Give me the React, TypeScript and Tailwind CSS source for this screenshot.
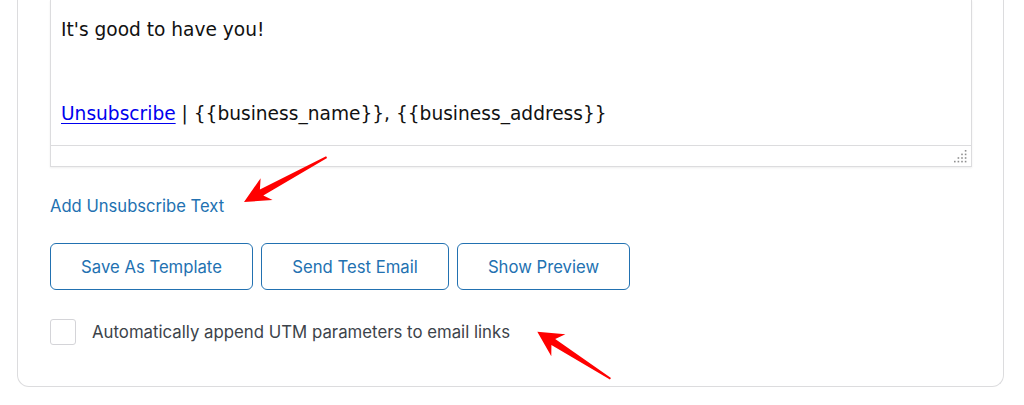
import React from "react";

function ResizeHandle() {
  const dots: React.ReactElement[] = [];
  for (let j = 0; j < 4; j++) {
    for (let i = 0; i < 4; i++) {
      if (i + j >= 3) {
        dots.push(
          <rect key={`${i}-${j}`} x={i * 3.6} y={j * 3.6} width={1.6} height={1.6} fill="#8f8f8f" />
        );
      }
    }
  }
  return (
    <svg width="13" height="13" viewBox="0 0 13 13" className="block">
      {dots}
    </svg>
  );
}

export default function App() {
  return (
    <div
      className="relative w-[1024px] h-[405px] overflow-hidden bg-white"
      style={{ fontFamily: "Inter, 'Noto Sans', sans-serif" }}
    >
      <div className="ml-[17px] mr-[20px] h-[387px] border-x border-b border-[#dcdcde] rounded-b-[12px] pl-[32px] pr-[31px] pb-[42px] flex flex-col">
        {/* editor */}
        <div className="w-[922px] border-x border-b border-[#dcdcde] shadow-[0_1px_2px_rgba(0,0,0,0.07)] bg-white">
          <div
            className="h-[145px] pl-[10px] pt-[16px] text-[18.6px] leading-[27px] text-[#111]"
            style={{ fontFamily: "'DejaVu Sans', Verdana, sans-serif" }}
          >
            <p>It's good to have you!</p>
            <p className="mt-[57px]">
              <span className="text-[#0000ee] underline underline-offset-[3px] decoration-1">Unsubscribe</span>
              {" | {{business_name}}, {{business_address}}"}
            </p>
          </div>
          <div className="h-[21px] border-t border-[#dcdcde] flex justify-end items-end pr-[4px] pb-[3px]">
            <ResizeHandle />
          </div>
        </div>

        <div className="mt-[27px] text-[16.6px] leading-[24px] text-[#2271b1]">Add Unsubscribe Text</div>

        <div className="mt-[25px] flex gap-[8px]">
          <button className="h-[47px] w-[203px] pt-[2px] rounded-[6px] border-[1.5px] border-[#2271b1] text-[16.7px] text-[#2271b1] bg-white">
            Save As Template
          </button>
          <button className="h-[47px] w-[188px] pt-[2px] rounded-[6px] border-[1.5px] border-[#2271b1] text-[16.7px] text-[#2271b1] bg-white">
            Send Test Email
          </button>
          <button className="h-[47px] w-[173px] pt-[2px] rounded-[6px] border-[1.5px] border-[#2271b1] text-[16.7px] text-[#2271b1] bg-white">
            Show Preview
          </button>
        </div>

        <div className="mt-[28px] flex items-center">
          <div className="w-[26px] h-[26px] rounded-[3px] border border-[#d4d4d8] bg-white" />
          <span className="ml-[16px] pt-[2px] text-[16.8px] text-[#3c434a]">
            Automatically append UTM parameters to email links
          </span>
        </div>
      </div>

      {/* annotation arrows */}
      <svg className="absolute inset-0 pointer-events-none" width="1024" height="405" viewBox="0 0 1024 405">
        <polygon
          fill="#ff0000"
          points="244,202 260.6,178.2 259.9,189.4 326.1,156.3 327.1,158.1 263.3,195.5 272.6,200.1"
        />
        <polygon
          fill="#ff0000"
          points="537.3,331.7 565.4,334.3 555.2,339 611,377.9 609.9,379.6 551.4,344.9 551.3,356.2"
        />
      </svg>
    </div>
  );
}
